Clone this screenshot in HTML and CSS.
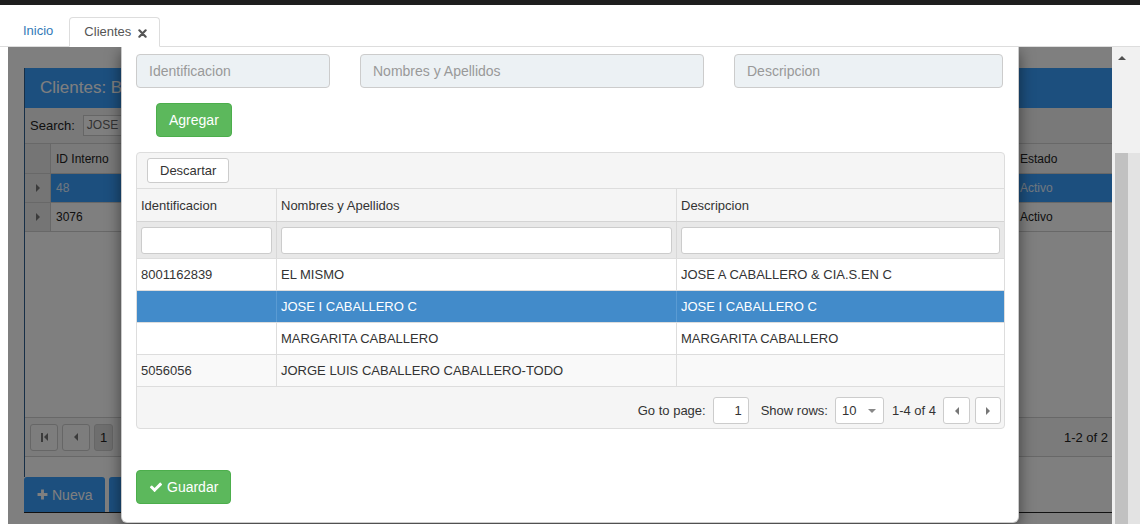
FILE: index.html
```html
<!DOCTYPE html>
<html lang="es">
<head>
<meta charset="utf-8">
<title>Clientes</title>
<link rel="stylesheet" href="styles.css">
</head>
<body>
<div class="topbar"></div>
<nav class="tabs">
  <a class="tab-link">Inicio</a>
  <div class="tab-active">Clientes
    <svg class="tab-close" viewBox="0 0 10 10" width="9" height="9"><path d="M1.5 1.5 L8.5 8.5 M8.5 1.5 L1.5 8.5" stroke="#555" stroke-width="2.4" stroke-linecap="round"/></svg>
  </div>
</nav>
<div class="stage">
  <div class="viewport">
    <div class="bg-page">
      <div class="bg-panel">
        <div class="bg-head">Clientes: Busqueda</div>
        <div class="bg-search"><span>Search:</span><span class="bg-search-input">JOSE</span></div>
        <div class="bg-row bg-hdr"><span class="bg-exp"></span><span class="bg-c1">ID Interno</span><span class="bg-fill"></span><span class="bg-cl">Estado</span></div>
        <div class="bg-row bg-sel"><span class="bg-exp"><i class="tri-r"></i></span><span class="bg-c1">48</span><span class="bg-fill"></span><span class="bg-cl">Activo</span></div>
        <div class="bg-row"><span class="bg-exp"><i class="tri-r"></i></span><span class="bg-c1">3076</span><span class="bg-fill"></span><span class="bg-cl">Activo</span></div>
        <div class="bg-empty"></div>
        <div class="bg-pager">
          <span class="bg-pbtn"><i class="bar"></i><i class="tri-l"></i></span>
          <span class="bg-pbtn"><i class="tri-l"></i></span>
          <span class="bg-pbtn bg-pnum">1</span>
          <span class="bg-pinfo">1-2 of 2</span>
        </div>
        <div class="bg-gap"></div>
      </div>
      <div class="bg-actions">
        <span class="bg-btn"><svg class="plus" viewBox="0 0 10 10" width="11" height="11"><path d="M5 0.5 V9.5 M0.5 5 H9.5" stroke="#fff" stroke-width="2.6"/></svg>Nueva</span>
        <span class="bg-btn">Editar</span>
      </div>
    </div>
    <div class="backdrop"></div>
    <div class="modal">
      <div class="form-row">
        <div class="fld fld-1">Identificacion</div>
        <div class="fld fld-2">Nombres y Apellidos</div>
        <div class="fld fld-3">Descripcion</div>
      </div>
      <button class="btn btn-green btn-add">Agregar</button>
      <div class="grid">
        <div class="grid-toolbar"><button class="btn-light">Descartar</button></div>
        <div class="grow ghead"><div>Identificacion</div><div>Nombres y Apellidos</div><div>Descripcion</div></div>
        <div class="grow gfilter"><div><span class="finput"></span></div><div><span class="finput"></span></div><div><span class="finput"></span></div></div>
        <div class="grow gdata"><div>8001162839</div><div>EL MISMO</div><div>JOSE A CABALLERO &amp; CIA.S.EN C</div></div>
        <div class="grow gdata gsel"><div></div><div>JOSE I CABALLERO C</div><div>JOSE I CABALLERO C</div></div>
        <div class="grow gdata"><div></div><div>MARGARITA CABALLERO</div><div>MARGARITA CABALLERO</div></div>
        <div class="grow gdata galt"><div>5056056</div><div>JORGE LUIS CABALLERO CABALLERO-TODO</div><div></div></div>
        <div class="grid-footer">
          <span>Go to page:</span>
          <span class="pg-input">1</span>
          <span class="pg-label2">Show rows:</span>
          <span class="pg-select">10<i class="tri-d"></i></span>
          <span class="pg-info">1-4 of 4</span>
          <span class="pg-btn"><i class="tri-l"></i></span>
          <span class="pg-btn pg-next"><i class="tri-r"></i></span>
        </div>
      </div>
      <button class="btn btn-green btn-save">
        <svg class="check" viewBox="0 0 1792 1792" width="14" height="14"><path fill="#fff" d="M1671 566q0 40-28 68l-724 724-136 136q-28 28-68 28t-68-28l-136-136-362-362q-28-28-28-68t28-68l136-136q28-28 68-28t68 28l294 295 656-657q28-28 68-28t68 28l136 136q28 28 28 68z"/></svg>Guardar
      </button>
    </div>
  </div>
  <div class="scrollbar"><div class="sb-up"></div><div class="sb-thumb"></div></div>
</div>
</body>
</html>
```

FILE: styles.css
```css
* { box-sizing: border-box; }
html, body { margin: 0; }
body {
  width: 1140px;
  height: 524px;
  overflow: hidden;
  display: flex;
  flex-direction: column;
  font-family: "Liberation Sans", Arial, sans-serif;
  font-size: 13px;
  color: #333;
  background: #fff;
}

.topbar { height: 5px; flex: none; background: #1e1e1e; }

.tabs {
  flex: none;
  height: 42px;
  display: flex;
  align-items: flex-end;
  padding-left: 8px;
  border-bottom: 1px solid #ddd;
}
.tab-link {
  color: #337ab7;
  padding: 0 15px;
  height: 30px;
  line-height: 28px;
  margin-bottom: -1px;
}
.tab-active {
  margin-left: 1px;
  margin-bottom: -1px;
  height: 30px;
  line-height: 28px;
  padding: 0 12px 0 14px;
  border: 1px solid #ddd;
  border-bottom-color: #fff;
  border-radius: 4px 4px 0 0;
  background: #fff;
  color: #555;
  display: flex;
  align-items: center;
  gap: 7px;
}
.tab-close { display: block; margin-top: 2px; }

.stage { flex: 1; display: flex; padding-left: 8px; min-height: 0; }
.viewport { flex: 1; position: relative; overflow: hidden; background: #fff; }
.scrollbar { width: 28px; flex: none; background: #f1f1f1; display: flex; flex-direction: column; }
.sb-up {
  margin: 9px 0 0 6px;
  width: 0; height: 0;
  border-left: 4px solid transparent;
  border-right: 4px solid transparent;
  border-bottom: 4px solid #505050;
}
.sb-thumb {
  margin-top: 93px;
  flex: 1;
  margin-left: 3px;
  width: 13px;
  background: #c1c1c1;
  box-shadow: 12px 0 0 #e3e3e3;
}

/* ---------- background page (under the backdrop) ---------- */
.bg-page { position: relative; z-index: 0; padding: 21px 0 0 16px; font-size: 12px; color: #222; }
.bg-panel { border-left: 1px solid #2f5f8f; }
.bg-head {
  height: 40px;
  line-height: 40px;
  background: #389efc;
  color: #fff;
  font-size: 17px;
  padding-left: 15px;
}
.bg-search {
  height: 35px;
  display: flex;
  align-items: center;
  padding-left: 5px;
  gap: 8px;
  background: #f2f2f2;
  font-size: 13px;
}
.bg-search-input {
  height: 21px;
  line-height: 19px;
  width: 60px;
  padding-left: 3px;
  border: 1px solid #ccc;
  background: #fff;
  color: #666;
  font-size: 12px;
}
.bg-row {
  height: 29px;
  display: flex;
  align-items: stretch;
  border-bottom: 1px solid #d0d0d0;
  background: #fff;
}
.bg-hdr { height: 31px; border-top: 1px solid #d0d0d0; background: #f4f4f4; }
.bg-exp {
  width: 26px;
  flex: none;
  background: #eaeaea;
  border-right: 1px solid #d0d0d0;
  display: flex;
  align-items: center;
  justify-content: center;
}
.bg-c1 { padding-left: 5px; display: flex; align-items: center; width: 120px; }
.bg-fill { flex: 1; }
.bg-cl { width: 96px; padding-left: 4px; display: flex; align-items: center; }
.bg-sel .bg-c1, .bg-sel .bg-fill, .bg-sel .bg-cl { background: #389efc; color: #e0f0ff; }
.bg-empty { height: 185px; background: #fff; }
.bg-pager {
  height: 40px;
  border-top: 1px solid #d0d0d0;
  border-bottom: 1px solid #d0d0d0;
  background: #f6f6f6;
  display: flex;
  align-items: center;
  padding: 0 4px 0 5px;
  gap: 4px;
}
.bg-pbtn {
  width: 28px;
  height: 27px;
  border: 1px solid #ccc;
  border-radius: 3px;
  background: #fafafa;
  display: flex;
  align-items: center;
  justify-content: center;
}
.bg-pnum { width: 19px; background: #ddd; font-size: 13px; }
.bg-pinfo { margin-left: auto; font-size: 13px; }
.bg-gap { height: 20px; background: #fff; }
.bg-actions {
  display: flex;
  gap: 4px;
  border-bottom: 1px solid #222;
  background: #fff;
}
.bg-btn {
  height: 35px;
  padding: 0 13px;
  display: flex;
  align-items: center;
  gap: 4px;
  background: #389efc;
  color: #fff;
  font-size: 14px;
  border-radius: 3px 3px 0 0;
}
.plus { display: block; }

.backdrop { position: absolute; inset: 0; z-index: 1; background: rgba(0, 0, 0, 0.5); }

/* ---------- modal ---------- */
.modal {
  position: absolute;
  z-index: 2;
  left: 113px;
  top: 0;
  width: 898px;
  background: #fff;
  border: 1px solid rgba(0, 0, 0, 0.2);
  border-top: none;
  border-radius: 0 0 6px 6px;
  box-shadow: 0 5px 15px rgba(0, 0, 0, 0.5);
  padding: 7px 14px 18px;
}
.form-row { display: flex; gap: 30px; }
.fld {
  height: 34px;
  line-height: 32px;
  padding-left: 12px;
  border: 1px solid #ccc;
  border-radius: 4px;
  background: #ecf1f4;
  color: #999;
  font-size: 14px;
}
.fld-1 { width: 194px; }
.fld-2 { width: 344px; }
.fld-3 { width: 269px; }

.btn {
  display: flex;
  align-items: center;
  height: 34px;
  padding: 0 12px;
  border-radius: 4px;
  font-family: inherit;
  font-size: 14px;
}
.btn-green { background: #5cb85c; border: 1px solid #4cae4c; color: #fff; }
.btn-add { margin: 15px 0 0 20px; }
.btn-save { margin-top: 41px; gap: 4px; }
.check { display: block; }

.grid {
  margin-top: 15px;
  width: 869px;
  border: 1px solid #ddd;
  border-radius: 4px;
  background: #f5f5f5;
}
.grid-toolbar { height: 35px; padding: 5px 10px; }
.btn-light {
  height: 25px;
  padding: 0 12px;
  border: 1px solid #ccc;
  border-radius: 3px;
  background: #fff;
  color: #333;
  font-family: inherit;
  font-size: 13px;
}
.grow {
  display: grid;
  grid-template-columns: 139px 400px 1fr;
  border-top: 1px solid #ddd;
}
.grow > div { border-left: 1px solid #ddd; padding-left: 4px; display: flex; align-items: center; }
.grow > div:first-child { border-left: none; }
.ghead { height: 33px; background: #f5f5f5; }
.gfilter { height: 37px; background: #e8e8e8; border-top-color: #d4d4d4; }
.gfilter > div { padding: 0 4px; border-left-color: #d8d8d8; }
.finput {
  display: block;
  width: 100%;
  height: 27px;
  background: #fff;
  border: 1px solid #ccc;
  border-radius: 3px;
}
.gdata { height: 32px; background: #fff; }
.galt { background: #f9f9f9; }
.gsel { background: #428bca; color: #fff; }
.gsel > div { border-left-color: #5a9bd3; }

.grid-footer {
  height: 42px;
  border-top: 1px solid #ddd;
  padding: 10px 3px 4px 0;
  display: flex;
  align-items: center;
  justify-content: flex-end;
}
.pg-input {
  margin-left: 7px;
  width: 36px;
  height: 27px;
  line-height: 25px;
  border: 1px solid #ccc;
  border-radius: 3px;
  background: #fff;
  text-align: right;
  padding-right: 6px;
}
.pg-label2 { margin-left: 12px; }
.pg-select {
  margin-left: 7px;
  width: 49px;
  height: 27px;
  border: 1px solid #ccc;
  border-radius: 3px;
  background: #fff;
  display: flex;
  align-items: center;
  padding: 0 7px 0 6px;
  justify-content: space-between;
}
.pg-info { margin-left: 8px; }
.pg-btn {
  margin-left: 7px;
  width: 27px;
  height: 27px;
  border: 1px solid #ccc;
  border-radius: 3px;
  background: #fff;
  display: flex;
  align-items: center;
  justify-content: center;
}
.pg-next { margin-left: 5px; width: 26px; }

.tri-l, .tri-r, .tri-d { display: block; width: 0; height: 0; }
.tri-l { border-top: 4px solid transparent; border-bottom: 4px solid transparent; border-right: 4px solid #777; }
.tri-r { border-top: 4px solid transparent; border-bottom: 4px solid transparent; border-left: 4px solid #777; }
.tri-d { border-left: 4px solid transparent; border-right: 4px solid transparent; border-top: 4px solid #888; }
.bar { display: block; width: 2px; height: 9px; background: #777; margin-right: 1px; }
```
